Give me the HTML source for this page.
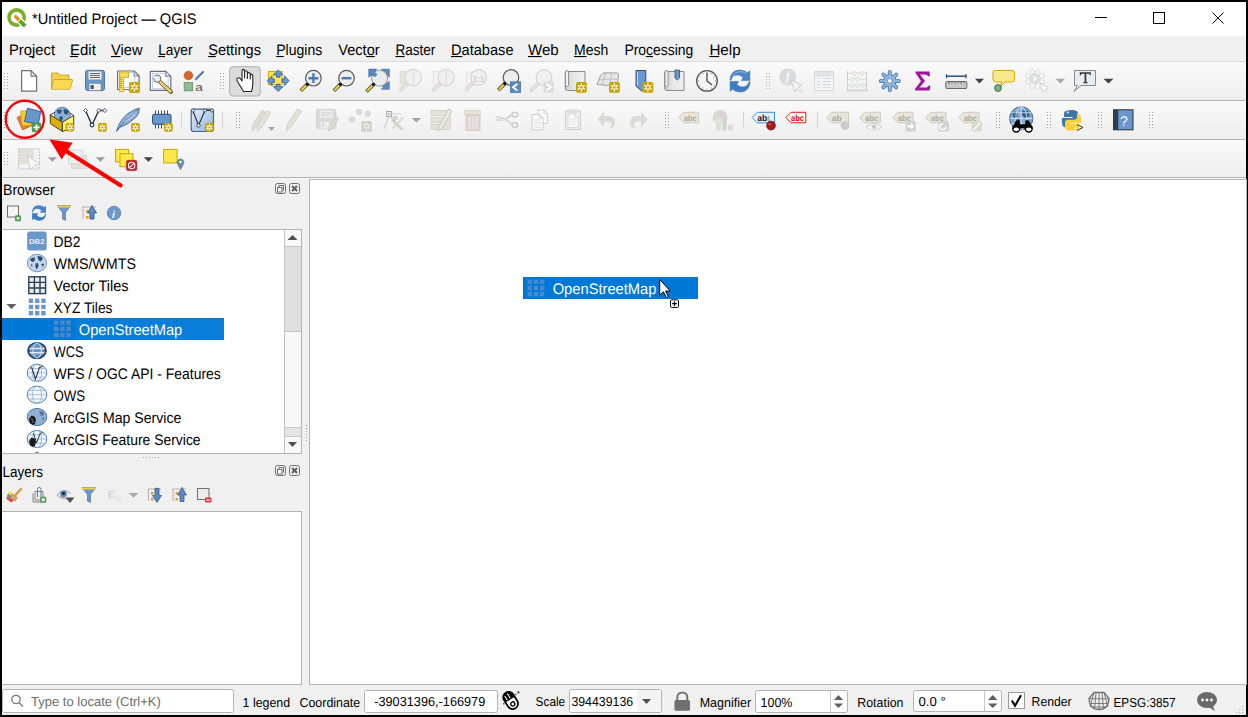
<!DOCTYPE html>
<html><head><meta charset="utf-8"><title>QGIS</title>
<style>html,body{margin:0;padding:0;background:#000;overflow:hidden;width:1248px;height:717px}svg{display:block}text{font-family:"Liberation Sans",sans-serif;text-rendering:geometricPrecision}</style>
</head><body>
<svg width="1248" height="717" viewBox="0 0 1248 717" font-family="Liberation Sans, sans-serif">
<defs>
<linearGradient id="vbg" x1="0" y1="0" x2="1" y2="1"><stop offset="0" stop-color="#e8eef6"/><stop offset="1" stop-color="#8fb2d8"/></linearGradient>
<linearGradient id="scr" x1="0" y1="0" x2="1" y2="0"><stop offset="0" stop-color="#c8c8c8"/><stop offset="0.4" stop-color="#e6e6e6"/><stop offset="1" stop-color="#f0f0f0"/></linearGradient>
<linearGradient id="tbg" x1="0" y1="0" x2="0" y2="1"><stop offset="0" stop-color="#fafafa"/><stop offset="1" stop-color="#eeeeee"/></linearGradient>
</defs>
<rect x="0" y="0" width="1248" height="717" fill="#000"/>
<rect x="2" y="2" width="1244" height="713" fill="#f0f0f0"/>
<rect x="2" y="2" width="1244" height="34" fill="#fff"/>
<rect x="2" y="36" width="1244" height="25" fill="#f0f0f0"/>
<rect x="2" y="61" width="1244" height="1" fill="#dadada"/>
<rect x="2" y="62" width="1244" height="38" fill="url(#tbg)"/>
<rect x="2" y="100" width="1244" height="1" fill="#b4b4b4"/>
<rect x="2" y="101" width="1244" height="38" fill="url(#tbg)"/>
<rect x="2" y="139" width="1244" height="1" fill="#b4b4b4"/>
<rect x="2" y="140" width="1244" height="37" fill="url(#tbg)"/>
<rect x="2" y="177" width="1244" height="1" fill="#b4b4b4"/>
<rect x="2" y="178" width="1244" height="1" fill="#f8f8f8"/>
<text x="32.00" y="24.00" font-size="15.30" textLength="164.50" lengthAdjust="spacingAndGlyphs" fill="#000" >*Untitled Project — QGIS</text>
<rect x="1095" y="17" width="12" height="1" fill="#000"/>
<rect x="1153.5" y="12.5" width="11" height="11" fill="none" stroke="#000" stroke-width="1"/>
<path d="M1212.5 12.5 L1223.5 23.5 M1223.5 12.5 L1212.5 23.5" stroke="#000" stroke-width="1"/>
<text x="9.00" y="55.00" font-size="15.30" textLength="46.00" lengthAdjust="spacingAndGlyphs" fill="#000" >Project</text>
<text x="70.00" y="55.00" font-size="15.30" textLength="25.80" lengthAdjust="spacingAndGlyphs" fill="#000" >Edit</text>
<text x="111.00" y="55.00" font-size="15.30" textLength="31.46" lengthAdjust="spacingAndGlyphs" fill="#000" >View</text>
<text x="158.20" y="55.00" font-size="15.30" textLength="34.31" lengthAdjust="spacingAndGlyphs" fill="#000" >Layer</text>
<text x="208.20" y="55.00" font-size="15.30" textLength="52.80" lengthAdjust="spacingAndGlyphs" fill="#000" >Settings</text>
<text x="276.20" y="55.00" font-size="15.30" textLength="46.10" lengthAdjust="spacingAndGlyphs" fill="#000" >Plugins</text>
<text x="338.30" y="55.00" font-size="15.30" textLength="41.30" lengthAdjust="spacingAndGlyphs" fill="#000" >Vector</text>
<text x="395.40" y="55.00" font-size="15.30" textLength="40.00" lengthAdjust="spacingAndGlyphs" fill="#000" >Raster</text>
<text x="451.00" y="55.00" font-size="15.30" textLength="62.50" lengthAdjust="spacingAndGlyphs" fill="#000" >Database</text>
<text x="528.00" y="55.00" font-size="15.30" textLength="30.75" lengthAdjust="spacingAndGlyphs" fill="#000" >Web</text>
<text x="574.00" y="55.00" font-size="15.30" textLength="34.30" lengthAdjust="spacingAndGlyphs" fill="#000" >Mesh</text>
<text x="624.40" y="55.00" font-size="15.30" textLength="68.90" lengthAdjust="spacingAndGlyphs" fill="#000" >Processing</text>
<text x="709.40" y="55.00" font-size="15.30" textLength="31.19" lengthAdjust="spacingAndGlyphs" fill="#000" >Help</text>
<rect x="29.2" y="56" width="4.4" height="1.1" fill="#000"/>
<rect x="70.0" y="56" width="8.0" height="1.1" fill="#000"/>
<rect x="111.0" y="56" width="9.5" height="1.1" fill="#000"/>
<rect x="158.2" y="56" width="6.8" height="1.1" fill="#000"/>
<rect x="208.2" y="56" width="7.6" height="1.1" fill="#000"/>
<rect x="276.2" y="56" width="7.6" height="1.1" fill="#000"/>
<rect x="366.0" y="56" width="8.8" height="1.1" fill="#000"/>
<rect x="395.4" y="56" width="9.2" height="1.1" fill="#000"/>
<rect x="451.0" y="56" width="11.3" height="1.1" fill="#000"/>
<rect x="528.0" y="56" width="13.7" height="1.1" fill="#000"/>
<rect x="574.0" y="56" width="12.5" height="1.1" fill="#000"/>
<rect x="645.8" y="56" width="7.2" height="1.1" fill="#000"/>
<rect x="709.4" y="56" width="9.8" height="1.1" fill="#000"/>
<text x="3.00" y="195.00" font-size="15.30" textLength="51.69" lengthAdjust="spacingAndGlyphs" fill="#000" >Browser</text>
<rect x="2" y="229" width="300" height="225" fill="#b4b4b4"/>
<rect x="2" y="230" width="299" height="223" fill="#fff"/>
<rect x="285" y="230" width="16" height="223" fill="#f8f8f8"/>
<rect x="284" y="230" width="1" height="223" fill="#c4c4c4"/>
<rect x="285" y="246" width="16" height="86" fill="#e0e0e0"/>
<rect x="285" y="246" width="16" height="1" fill="#c4c4c4"/>
<rect x="285" y="331" width="16" height="1" fill="#c4c4c4"/>
<rect x="285" y="427" width="16" height="9" fill="#e4e4e4"/>
<rect x="285" y="427" width="16" height="1" fill="#c8c8c8"/>
<rect x="285" y="436" width="16" height="1" fill="#c8c8c8"/>
<path d="M287.5 240 L292.5 235 L297.5 240 Z" fill="#505050"/>
<path d="M288 442 L297 442 L292.5 447 Z" fill="#505050"/>
<rect x="2" y="318" width="222" height="22" fill="#0078d7"/>
<rect x="75" y="318" width="149" height="22" fill="#0a7dd9"/>
<text x="53.50" y="246.50" font-size="15.30" textLength="27.00" lengthAdjust="spacingAndGlyphs" fill="#000" >DB2</text>
<text x="53.50" y="268.50" font-size="15.30" textLength="82.51" lengthAdjust="spacingAndGlyphs" fill="#000" >WMS/WMTS</text>
<text x="53.50" y="290.50" font-size="15.30" textLength="75.00" lengthAdjust="spacingAndGlyphs" fill="#000" >Vector Tiles</text>
<text x="53.50" y="312.50" font-size="15.30" textLength="59.00" lengthAdjust="spacingAndGlyphs" fill="#000" >XYZ Tiles</text>
<text x="78.80" y="334.50" font-size="15.30" textLength="103.49" lengthAdjust="spacingAndGlyphs" fill="#fff" >OpenStreetMap</text>
<text x="53.50" y="356.50" font-size="15.30" textLength="30.10" lengthAdjust="spacingAndGlyphs" fill="#000" >WCS</text>
<text x="53.50" y="378.50" font-size="15.30" textLength="167.31" lengthAdjust="spacingAndGlyphs" fill="#000" >WFS / OGC API - Features</text>
<text x="53.50" y="400.50" font-size="15.30" textLength="31.70" lengthAdjust="spacingAndGlyphs" fill="#000" >OWS</text>
<text x="53.50" y="422.50" font-size="15.30" textLength="127.80" lengthAdjust="spacingAndGlyphs" fill="#000" >ArcGIS Map Service</text>
<text x="53.50" y="444.50" font-size="15.30" textLength="147.10" lengthAdjust="spacingAndGlyphs" fill="#000" >ArcGIS Feature Service</text>
<path d="M6.5 304 L16.5 304 L11.5 309 Z" fill="#606060"/>
<rect x="143" y="457" width="1" height="1" fill="#a0a0a0"/>
<rect x="146" y="457" width="1" height="1" fill="#a0a0a0"/>
<rect x="149" y="457" width="1" height="1" fill="#a0a0a0"/>
<rect x="152" y="457" width="1" height="1" fill="#a0a0a0"/>
<rect x="155" y="457" width="1" height="1" fill="#a0a0a0"/>
<rect x="158" y="457" width="1" height="1" fill="#a0a0a0"/>
<rect x="306" y="425" width="1" height="1" fill="#a0a0a0"/>
<rect x="306" y="428" width="1" height="1" fill="#a0a0a0"/>
<rect x="306" y="431" width="1" height="1" fill="#a0a0a0"/>
<rect x="306" y="434" width="1" height="1" fill="#a0a0a0"/>
<rect x="306" y="437" width="1" height="1" fill="#a0a0a0"/>
<rect x="306" y="440" width="1" height="1" fill="#a0a0a0"/>
<text x="2.60" y="477.00" font-size="15.30" textLength="40.41" lengthAdjust="spacingAndGlyphs" fill="#000" >Layers</text>
<rect x="2" y="511" width="300" height="174" fill="#b4b4b4"/>
<rect x="2" y="512" width="299" height="172" fill="#fff"/>
<rect x="309.5" y="179.5" width="937" height="505" fill="#fff" stroke="#b4b4b4" stroke-width="1"/>
<rect x="523" y="277" width="175" height="22" fill="#0078d7"/>
<text x="552.70" y="293.60" font-size="15.30" textLength="103.79" lengthAdjust="spacingAndGlyphs" fill="#fff" >OpenStreetMap</text>
<rect x="2.5" y="689.5" width="231" height="23" rx="2" fill="#fff" stroke="#b4b4b4"/>
<text x="31.00" y="705.80" font-size="13.00" textLength="129.90" lengthAdjust="spacingAndGlyphs" fill="#6d6d6d" >Type to locate (Ctrl+K)</text>
<text x="242.60" y="706.70" font-size="13.00" textLength="47.50" lengthAdjust="spacingAndGlyphs" fill="#000" >1 legend</text>
<text x="299.50" y="706.70" font-size="13.00" textLength="60.70" lengthAdjust="spacingAndGlyphs" fill="#000" >Coordinate</text>
<rect x="364.5" y="690.5" width="133" height="22" rx="2" fill="#fff" stroke="#b4b4b4"/>
<text x="374.20" y="705.70" font-size="13.00" textLength="111.10" lengthAdjust="spacingAndGlyphs" fill="#000" >-39031396,-166979</text>
<text x="535.60" y="705.90" font-size="13.00" textLength="29.61" lengthAdjust="spacingAndGlyphs" fill="#000" >Scale</text>
<rect x="569.5" y="689.5" width="92" height="23" rx="2" fill="#fff" stroke="#b4b4b4"/>
<rect x="637" y="690" width="24" height="22" fill="#f4f4f4"/>
<text x="571.40" y="705.90" font-size="13.00" textLength="61.71" lengthAdjust="spacingAndGlyphs" fill="#000" >394439136</text>
<path d="M642 699 L651 699 L646.5 704 Z" fill="#505050"/>
<text x="699.70" y="706.70" font-size="13.00" textLength="51.40" lengthAdjust="spacingAndGlyphs" fill="#000" >Magnifier</text>
<rect x="755.5" y="690.5" width="92" height="22" rx="2" fill="#fff" stroke="#b4b4b4"/>
<rect x="830" y="691" width="1" height="21" fill="#c8c8c8"/>
<text x="760.60" y="706.70" font-size="13.00" textLength="31.80" lengthAdjust="spacingAndGlyphs" fill="#000" >100%</text>
<path d="M834 700 L843 700 L838.5 695 Z M834 703.5 L843 703.5 L838.5 708 Z" fill="#606060"/>
<text x="857.30" y="706.70" font-size="13.00" textLength="46.10" lengthAdjust="spacingAndGlyphs" fill="#000" >Rotation</text>
<rect x="913.5" y="690.5" width="88" height="21" rx="2" fill="#fff" stroke="#b4b4b4"/>
<rect x="984" y="691" width="1" height="20" fill="#c8c8c8"/>
<text x="918.40" y="705.60" font-size="13.00" textLength="27.30" lengthAdjust="spacingAndGlyphs" fill="#000" >0.0 °</text>
<path d="M988 700 L997.5 700 L992.75 695 Z M988 703.5 L997.5 703.5 L992.75 708 Z" fill="#606060"/>
<rect x="1008.5" y="692.5" width="16" height="16" fill="#fff" stroke="#9a9a9a"/>
<path d="M1011.8 700.5 L1015 705.8 L1021 695.3" fill="none" stroke="#000" stroke-width="2.1"/>
<text x="1031.60" y="706.20" font-size="13.00" textLength="40.10" lengthAdjust="spacingAndGlyphs" fill="#000" >Render</text>
<text x="1113.50" y="706.80" font-size="13.00" textLength="62.10" lengthAdjust="spacingAndGlyphs" fill="#000" >EPSG:3857</text>
<circle cx="16.6" cy="17.5" r="7.6" fill="none" stroke="#7cac2a" stroke-width="3.6"/>
<path d="M18.5 19.5 L27 28" stroke="#fff" stroke-width="6.5"/>
<path d="M15.6 16.6 L19.3 20.3" stroke="#f08020" stroke-width="3.2" stroke-linecap="round"/>
<path d="M19.3 20.3 L25.2 26.2" stroke="#5fa038" stroke-width="4"/>
<path d="M18.6 19.6 L20 21" stroke="#c8d840" stroke-width="3.6"/>
<rect x="4" y="73" width="1" height="1" fill="#a4a4a4"/><rect x="7" y="73" width="1" height="1" fill="#a4a4a4"/><rect x="4" y="76" width="1" height="1" fill="#a4a4a4"/><rect x="7" y="76" width="1" height="1" fill="#a4a4a4"/><rect x="4" y="79" width="1" height="1" fill="#a4a4a4"/><rect x="7" y="79" width="1" height="1" fill="#a4a4a4"/><rect x="4" y="82" width="1" height="1" fill="#a4a4a4"/><rect x="7" y="82" width="1" height="1" fill="#a4a4a4"/><rect x="4" y="85" width="1" height="1" fill="#a4a4a4"/><rect x="7" y="85" width="1" height="1" fill="#a4a4a4"/><rect x="4" y="88" width="1" height="1" fill="#a4a4a4"/><rect x="7" y="88" width="1" height="1" fill="#a4a4a4"/>
<path d="M21.6 70.6 H31.1 L36.6 76.1 V91.2 H21.6 Z" fill="#fff" stroke="#707070" stroke-width="1.2" stroke-linejoin="round"/>
<path d="M31.1 70.6 V76.1 H36.6" fill="none" stroke="#707070" stroke-width="1.1"/>
<path d="M51.5 73 H58 L60 75 H69 V80 H72.5 L70 89.2 H51.5 Z" fill="#f3d04c" stroke="#c9a932" stroke-width="1" stroke-linejoin="round"/>
<path d="M51.5 89.2 L54 79.5 H72.5" fill="none" stroke="#c9a932" stroke-width="1"/>
<path d="M52 89 L54.3 80 H72 L69.7 88.7 Z" fill="#fbd957"/>
<rect x="85.5" y="70.3" width="19" height="20.3" rx="2.2" fill="#6a97c9" stroke="#4a77aa" stroke-width="1"/>
<rect x="88.2" y="71.2" width="13.6" height="8.6" fill="#f0f0f0" stroke="#9a9a9a" stroke-width="0.5"/>
<path d="M90 73.5 H100 M90 75.5 H100 M90 77.5 H100" stroke="#555" stroke-width="0.9"/>
<rect x="89" y="83.4" width="12" height="7" fill="#efefef" stroke="#777" stroke-width="0.5"/>
<rect x="90.5" y="85" width="3.3" height="4" fill="#3b5d86"/>
<path d="M117.6 71.0 H134.1 L139.1 76.0 V89.5 H117.6 Z" fill="#fff" stroke="#707070" stroke-width="1.2" stroke-linejoin="round"/>
<path d="M134.1 71.0 V76.0 H139.1" fill="none" stroke="#707070" stroke-width="1.1"/>
<rect x="120" y="72.5" width="15" height="15" fill="none" stroke="#a8c4f0" stroke-width="0.8"/>
<path d="M119.5 72 H128.6 V77.5 H123.6 V91.8 H119.5 Z" fill="#f6d957" stroke="#d4aa1c" stroke-width="0.9"/>
<path d="M119.6 77.5 H122 M119.6 79.5 H122 M119.6 81.5 H122 M119.6 83.5 H122 M119.6 85.5 H122 M119.6 87.5 H122" stroke="#a08010" stroke-width="0.6"/>
<rect x="129.0" y="81.9" width="11.0" height="11.0" rx="1.8" fill="#c8a400"/>
<path d="M134.50 83.00 V91.80 M130.69 85.20 L138.31 89.60 M130.69 89.60 L138.31 85.20" stroke="#fff" stroke-width="1.1"/>
<circle cx="134.50" cy="87.40" r="1.87" fill="#c8a400" stroke="#fff" stroke-width="1"/>
<path d="M150.3 71.3 H165.8 L170.8 76.3 V90.3 H150.3 Z" fill="#fff" stroke="#707070" stroke-width="1.2" stroke-linejoin="round"/>
<path d="M165.8 71.3 V76.3 H170.8" fill="none" stroke="#707070" stroke-width="1.1"/>
<rect x="152.3" y="73.3" width="15.8" height="15.5" fill="none" stroke="#a8c4f0" stroke-width="0.9"/>
<path d="M158 80 L171 92" stroke="#5a5030" stroke-width="4" stroke-linecap="round"/>
<path d="M158 80 L170.5 91.5" stroke="#e8d070" stroke-width="2.6" stroke-linecap="round"/>
<circle cx="157.3" cy="78.6" r="3.6" fill="#e8e8e8" stroke="#707070" stroke-width="1"/>
<path d="M154 76.5 L157 79.5" stroke="#fff" stroke-width="1.6"/>
<circle cx="188.4" cy="75.5" r="4.3" fill="#d8652a" stroke="#b34a18" stroke-width="0.6"/>
<path d="M196 79 L203 72" stroke="#4e78ac" stroke-width="2.2" stroke-linecap="round"/>
<rect x="184.2" y="82.6" width="8.5" height="8.2" fill="#8fbb8f" stroke="#5b8f5b" stroke-width="0.8"/>
<text x="195.3" y="90.6" font-size="11" fill="#555" textLength="7.6" lengthAdjust="spacingAndGlyphs">a</text>
<rect x="220" y="73" width="1" height="1" fill="#a4a4a4"/><rect x="223" y="73" width="1" height="1" fill="#a4a4a4"/><rect x="220" y="76" width="1" height="1" fill="#a4a4a4"/><rect x="223" y="76" width="1" height="1" fill="#a4a4a4"/><rect x="220" y="79" width="1" height="1" fill="#a4a4a4"/><rect x="223" y="79" width="1" height="1" fill="#a4a4a4"/><rect x="220" y="82" width="1" height="1" fill="#a4a4a4"/><rect x="223" y="82" width="1" height="1" fill="#a4a4a4"/><rect x="220" y="85" width="1" height="1" fill="#a4a4a4"/><rect x="223" y="85" width="1" height="1" fill="#a4a4a4"/><rect x="220" y="88" width="1" height="1" fill="#a4a4a4"/><rect x="223" y="88" width="1" height="1" fill="#a4a4a4"/>
<rect x="229.7" y="66.7" width="30.5" height="29.3" rx="3" fill="#dcdcdc" stroke="#adadad" stroke-width="1"/>
<path d="M243.5 91.5 L237.5 81.5 Q236 78.5 238.2 77.8 Q239.8 77.3 241 79.5 L242 81 V71.2 Q242 69.4 243.3 69.4 Q244.6 69.4 244.6 71.2 V78 V72.3 Q244.6 70.8 246 70.8 Q247.4 70.8 247.4 72.3 V78.5 V73.8 Q247.4 72.6 248.8 72.6 Q250.2 72.6 250.2 73.8 V79 V75.6 Q250.2 74.4 251.5 74.4 Q252.8 74.4 252.8 75.6 V84 Q252.8 87.5 251.5 91.5 Z" fill="#fff" stroke="#222" stroke-width="1.1" stroke-linejoin="round"/>
<rect x="268.4" y="71.5" width="13.5" height="13.2" fill="#fde74c" stroke="#d2aa00" stroke-width="1"/>
<path d="M273.3 74.8 L278.2 70 L283.1 74.8 H279.9 V77.2 H276.5 V74.8 Z" fill="#6a97c9" stroke="#2f5d93" stroke-width="0.8" stroke-linejoin="round"/>
<path d="M273.3 86.6 L278.2 91.6 L283.1 86.6 H279.9 V84.2 H276.5 V86.6 Z" fill="#6a97c9" stroke="#2f5d93" stroke-width="0.8" stroke-linejoin="round"/>
<path d="M272 75.8 L267.2 80.7 L272 85.6 V82.4 H274.4 V79 H272 Z" fill="#6a97c9" stroke="#2f5d93" stroke-width="0.8" stroke-linejoin="round"/>
<path d="M284.4 75.8 L289.2 80.7 L284.4 85.6 V82.4 H282 V79 H284.4 Z" fill="#6a97c9" stroke="#2f5d93" stroke-width="0.8" stroke-linejoin="round"/>
<path d="M307.53 84.07 L300.81 90.79" stroke="#3a3a20" stroke-width="3.6"/>
<path d="M306.33 85.27 L301.24 90.36" stroke="#f0d040" stroke-width="2.2"/>
<circle cx="313.40" cy="78.20" r="7.80" fill="#ececec" stroke="#5a5a5a" stroke-width="1.2"/>
<circle cx="307.32" cy="84.28" r="1.5" fill="#000"/>
<path d="M313.4 73.3 V83.1 M308.5 78.2 H318.3" stroke="#4e7bb5" stroke-width="2.4"/>
<path d="M340.63 84.07 L333.91 90.79" stroke="#3a3a20" stroke-width="3.6"/>
<path d="M339.43 85.27 L334.34 90.36" stroke="#f0d040" stroke-width="2.2"/>
<circle cx="346.50" cy="78.20" r="7.80" fill="#ececec" stroke="#5a5a5a" stroke-width="1.2"/>
<circle cx="340.42" cy="84.28" r="1.5" fill="#000"/>
<path d="M341.6 78.2 H351.4" stroke="#4e7bb5" stroke-width="2.4"/>
<path transform="translate(368.8 69.2)" d="M0 0 H8 L6 2.2 L8.6 4.8 L4.8 8.6 L2.2 6 L0 8 Z" fill="#5b8ac2" stroke="#3b6aa3" stroke-width="0.6"/>
<path transform="translate(389.3 69.2) scale(-1 1)" d="M0 0 H8 L6 2.2 L8.6 4.8 L4.8 8.6 L2.2 6 L0 8 Z" fill="#5b8ac2" stroke="#3b6aa3" stroke-width="0.6"/>
<path transform="translate(389.3 89.3) scale(-1 -1)" d="M0 0 H8 L6 2.2 L8.6 4.8 L4.8 8.6 L2.2 6 L0 8 Z" fill="#5b8ac2" stroke="#3b6aa3" stroke-width="0.6"/>
<circle cx="379.6" cy="78.2" r="8" fill="#ebebeb" stroke="#8a8a8a" stroke-width="0.9"/>
<path transform="translate(368.8 69.2)" d="M0 0 H8 L6 2.2 L8.6 4.8 L4.8 8.6 L2.2 6 L0 8 Z" fill="#5b8ac2" opacity="0.0"/>
<path d="M374 84 L366.5 91.5" stroke="#3a3a20" stroke-width="3.6"/><path d="M372.5 85.5 L367 91" stroke="#f0d040" stroke-width="2.2"/><circle cx="373.6" cy="84.2" r="1.5" fill="#000"/>
<path d="M369.2 69.6 H376 L374 71.6 L377 74.6 L374.6 77 L371.6 74 L369.6 76 Z" fill="#5b8ac2" stroke="#3b6aa3" stroke-width="0.6"/>
<rect x="400" y="71.2" width="7.5" height="12.8" fill="#e4e2da" stroke="#d8d6ce" stroke-width="0.6"/>
<path d="M406.79 84.11 L401.14 89.76" stroke="#d8d6ce" stroke-width="4" stroke-linecap="round"/>
<path d="M406.44 84.46 L401.49 89.41" stroke="#e6e4dc" stroke-width="2.2" stroke-linecap="round"/>
<circle cx="413.30" cy="77.60" r="8.20" fill="#f0f0f0" stroke="#d6d6d6" stroke-width="1.2"/>
<path d="M413.5 70 V85.5" stroke="#d8d8d8" stroke-width="0.8"/>
<rect x="433.3" y="71.2" width="7" height="12.8" fill="#f4f4f4" stroke="#dcdcdc" stroke-width="0.7"/>
<path d="M439.59 84.11 L433.94 89.76" stroke="#d8d6ce" stroke-width="4" stroke-linecap="round"/>
<path d="M439.24 84.46 L434.29 89.41" stroke="#e6e4dc" stroke-width="2.2" stroke-linecap="round"/>
<circle cx="446.10" cy="77.60" r="8.20" fill="#f0f0f0" stroke="#d6d6d6" stroke-width="1.2"/>
<path d="M446.3 70 V85.5" stroke="#d8d8d8" stroke-width="0.8"/>
<rect x="466.5" y="72" width="7" height="12" fill="#f4f4f4" stroke="#dcdcdc" stroke-width="0.7"/>
<path d="M472.28 83.72 L466.62 89.38" stroke="#d8d6ce" stroke-width="4" stroke-linecap="round"/>
<path d="M471.92 84.08 L466.97 89.03" stroke="#e6e4dc" stroke-width="2.2" stroke-linecap="round"/>
<circle cx="478.50" cy="77.50" r="7.80" fill="#f0f0f0" stroke="#d6d6d6" stroke-width="1.2"/>
<text x="472.8" y="81.6" font-size="9" font-weight="bold" fill="#cfcfcf" textLength="11.5" lengthAdjust="spacingAndGlyphs">1:1</text>
<path d="M505.13 83.37 L498.41 90.09" stroke="#3a3a20" stroke-width="3.6"/>
<path d="M503.93 84.57 L498.84 89.66" stroke="#f0d040" stroke-width="2.2"/>
<circle cx="511.00" cy="77.50" r="7.80" fill="#ececec" stroke="#5a5a5a" stroke-width="1.2"/>
<circle cx="504.92" cy="83.58" r="1.5" fill="#000"/>
<rect x="510.3" y="81.8" width="10.4" height="10.8" fill="#5b8ac2" stroke="#3b6aa3" stroke-width="0.6"/>
<path d="M517.5 83.8 L513 87.2 L517.5 90.6" fill="none" stroke="#fff" stroke-width="1.8"/>
<path d="M537.78 83.72 L531.41 90.09" stroke="#d8d6ce" stroke-width="4" stroke-linecap="round"/>
<path d="M537.42 84.08 L531.77 89.73" stroke="#e6e4dc" stroke-width="2.2" stroke-linecap="round"/>
<circle cx="544.00" cy="77.50" r="7.80" fill="#f0f0f0" stroke="#d6d6d6" stroke-width="1.2"/>
<rect x="543.5" y="81.8" width="10.4" height="10.8" fill="#dcdcdc"/>
<path d="M546.5 83.8 L551 87.2 L546.5 90.6" fill="none" stroke="#fff" stroke-width="1.8"/>
<path d="M567 71.5 H585 V90.5 H567.5 Q565.2 90.5 565.2 88 V73 Q565.2 70.5 567 70.5 Z" fill="url(#scr)" stroke="#8a8a8a" stroke-width="1" stroke-linejoin="round"/>
<path d="M565.5 72 Q566.5 69.8 568.5 71 V85.5 Q567 87 565.5 86 Z" fill="#f4f4f4" stroke="#8a8a8a" stroke-width="0.9"/>
<rect x="576.0" y="82.0" width="10.8" height="10.8" rx="1.8" fill="#c8a400"/>
<path d="M581.40 83.08 V91.72 M577.66 85.24 L585.14 89.56 M577.66 89.56 L585.14 85.24" stroke="#fff" stroke-width="1.1"/>
<circle cx="581.40" cy="87.40" r="1.84" fill="#c8a400" stroke="#fff" stroke-width="1"/>
<path d="M597 84.5 L600.5 75.5 Q602 73 605 72.8 L617.5 73 L618.5 75 L617.5 85 Q607 86 597 84.5 Z" fill="#e6e6e6" stroke="#9a9a9a" stroke-width="0.9" stroke-linejoin="round"/>
<path d="M599 80 Q608 78 618 79.5 M605.5 73 L602.5 85 M611.5 73 L610 85.5" fill="none" stroke="#b0b0b0" stroke-width="0.7"/>
<rect x="609.0" y="82.0" width="10.8" height="10.8" rx="1.8" fill="#c8a400"/>
<path d="M614.40 83.08 V91.72 M610.66 85.24 L618.14 89.56 M610.66 89.56 L618.14 85.24" stroke="#fff" stroke-width="1.1"/>
<circle cx="614.40" cy="87.40" r="1.84" fill="#c8a400" stroke="#fff" stroke-width="1"/>
<path d="M636 70.5 H645.8 V91 H641.5 L636 86 Z" fill="#6a97c9" stroke="#2f4f78" stroke-width="1" stroke-linejoin="round"/>
<path d="M637.5 72 V85.5" stroke="#cfe0f2" stroke-width="0.9"/>
<rect x="642.5" y="82.0" width="10.8" height="10.8" rx="1.8" fill="#c8a400"/>
<path d="M647.90 83.08 V91.72 M644.16 85.24 L651.64 89.56 M644.16 89.56 L651.64 85.24" stroke="#fff" stroke-width="1.1"/>
<circle cx="647.90" cy="87.40" r="1.84" fill="#c8a400" stroke="#fff" stroke-width="1"/>
<path d="M666.5 71.5 H684 V90.5 H667 Q664.7 90.5 664.7 88 V73 Q664.7 70.5 666.5 70.5 Z" fill="url(#scr)" stroke="#8a8a8a" stroke-width="1" stroke-linejoin="round"/>
<path d="M665 72 Q666 69.8 668 71 V85.5 Q666.5 87 665 86 Z" fill="#f4f4f4" stroke="#8a8a8a" stroke-width="0.9"/>
<path d="M675 70 H679.5 V78 L677.25 80 L675 78 Z" fill="#6a97c9" stroke="#2f4f78" stroke-width="0.8"/>
<circle cx="707" cy="80.9" r="10.3" fill="#f6f6f6" stroke="#555" stroke-width="1.3"/>
<path d="M707 73 V81 L712 85" fill="none" stroke="#444" stroke-width="1.3"/>
<circle cx="707.00" cy="72.70" r="0.55" fill="#4e7bb5"/>
<circle cx="711.10" cy="73.80" r="0.55" fill="#4e7bb5"/>
<circle cx="714.10" cy="76.80" r="0.55" fill="#4e7bb5"/>
<circle cx="715.20" cy="80.90" r="0.55" fill="#4e7bb5"/>
<circle cx="714.10" cy="85.00" r="0.55" fill="#4e7bb5"/>
<circle cx="711.10" cy="88.00" r="0.55" fill="#4e7bb5"/>
<circle cx="707.00" cy="89.10" r="0.55" fill="#4e7bb5"/>
<circle cx="702.90" cy="88.00" r="0.55" fill="#4e7bb5"/>
<circle cx="699.90" cy="85.00" r="0.55" fill="#4e7bb5"/>
<circle cx="698.80" cy="80.90" r="0.55" fill="#4e7bb5"/>
<circle cx="699.90" cy="76.80" r="0.55" fill="#4e7bb5"/>
<circle cx="702.90" cy="73.80" r="0.55" fill="#4e7bb5"/>
<path d="M729.9 80.2 C730.3 74 734 70 739 70 C743 70 746 71.5 747.5 72.8 L749.9 70.8 V80.6 H741.2 L743.2 77.8 C741.5 76 739.5 75 737 75 C734 75 731.8 77 731 80.2 Z" fill="#4a84c6" stroke="#3a70b0" stroke-width="0.5"/>
<path transform="rotate(180 740 81)" d="M729.9 80.2 C730.3 74 734 70 739 70 C743 70 746 71.5 747.5 72.8 L749.9 70.8 V80.6 H741.2 L743.2 77.8 C741.5 76 739.5 75 737 75 C734 75 731.8 77 731 80.2 Z" fill="#3f7bc0" stroke="#3a70b0" stroke-width="0.5"/>
<path d="M732.5 77 C734 73 737 71.8 740 71.8 C743 71.8 745 72.5 746 73.5" fill="none" stroke="#9cc0e8" stroke-width="0.9"/>
<rect x="766" y="73" width="1" height="1" fill="#a4a4a4"/><rect x="769" y="73" width="1" height="1" fill="#a4a4a4"/><rect x="766" y="76" width="1" height="1" fill="#a4a4a4"/><rect x="769" y="76" width="1" height="1" fill="#a4a4a4"/><rect x="766" y="79" width="1" height="1" fill="#a4a4a4"/><rect x="769" y="79" width="1" height="1" fill="#a4a4a4"/><rect x="766" y="82" width="1" height="1" fill="#a4a4a4"/><rect x="769" y="82" width="1" height="1" fill="#a4a4a4"/><rect x="766" y="85" width="1" height="1" fill="#a4a4a4"/><rect x="769" y="85" width="1" height="1" fill="#a4a4a4"/><rect x="766" y="88" width="1" height="1" fill="#a4a4a4"/><rect x="769" y="88" width="1" height="1" fill="#a4a4a4"/>
<circle cx="787.7" cy="77" r="8.5" fill="#d8dadc"/>
<path d="M788.3 74.5 L786.5 82.5 M787 74.5 H789" stroke="#f4f4f4" stroke-width="2" stroke-linecap="round"/>
<circle cx="789.5" cy="71.8" r="1.1" fill="#f4f4f4"/>
<path d="M790.8 79.8 L795 92 L797 88.5 L801 92.2 L802.5 90.8 L798.5 87 L802 85.5 Z" fill="#f4f4f4" stroke="#c8c8c8" stroke-width="0.9" stroke-linejoin="round"/>
<rect x="814.5" y="71.5" width="19" height="19" fill="#f2f4f6" stroke="#d4d8dc" stroke-width="1"/>
<rect x="815" y="72" width="18" height="3.5" fill="#e4e8ec"/>
<path d="M815 75.8 H833" stroke="#d4d8dc" stroke-width="0.8"/>
<path d="M817 73.8 H820 M823 73.8 H830 M817 78.5 H820 M823 78.5 H831 M817 81.5 H820 M823 81.5 H831 M817 84.5 H820 M823 84.5 H831 M817 87.5 H820 M823 87.5 H831" stroke="#d6dadf" stroke-width="1"/>
<path d="M847.5 71 V90 M866.5 71 V90" stroke="#cdcdcd" stroke-width="1"/>
<rect x="846.5" y="89.5" width="21" height="2" fill="#d4d4d4"/>
<path d="M847.5 73.3 H866.5 M847.5 79.3 H866.5 M847.5 85.3 H866.5" stroke="#d6d6d6" stroke-width="0.9"/>
<path d="M854.5 71.0 l2.3 2.3 l-2.3 2.3 l-2.3 -2.3 Z" fill="#f0f0f0" stroke="#dcc8c8" stroke-width="0.8"/>
<path d="M862.0 71.0 l2.3 2.3 l-2.3 2.3 l-2.3 -2.3 Z" fill="#f0f0f0" stroke="#dcc8c8" stroke-width="0.8"/>
<path d="M852.3 77.0 l2.3 2.3 l-2.3 2.3 l-2.3 -2.3 Z" fill="#f0f0f0" stroke="#ccd8cc" stroke-width="0.8"/>
<path d="M857.5 77.0 l2.3 2.3 l-2.3 2.3 l-2.3 -2.3 Z" fill="#f0f0f0" stroke="#ccd8cc" stroke-width="0.8"/>
<path d="M852.3 83.0 l2.3 2.3 l-2.3 2.3 l-2.3 -2.3 Z" fill="#f0f0f0" stroke="#c8d0dc" stroke-width="0.8"/>
<path d="M857.5 83.0 l2.3 2.3 l-2.3 2.3 l-2.3 -2.3 Z" fill="#f0f0f0" stroke="#c8d0dc" stroke-width="0.8"/>
<path d="M862.7 83.0 l2.3 2.3 l-2.3 2.3 l-2.3 -2.3 Z" fill="#f0f0f0" stroke="#c8d0dc" stroke-width="0.8"/>
<path d="M889.80 71.90 L889.80 89.90 M883.44 74.54 L896.16 87.26 M880.80 80.90 L898.80 80.90 M883.44 87.26 L896.16 74.54" stroke="#4a7ab8" stroke-width="4" stroke-linecap="round"/>
<circle cx="889.8" cy="80.9" r="6.6" fill="#4a7ab8"/>
<path d="M889.80 71.90 L889.80 89.90 M883.44 74.54 L896.16 87.26 M880.80 80.90 L898.80 80.90 M883.44 87.26 L896.16 74.54" stroke="#93b6de" stroke-width="2.2" stroke-linecap="round"/>
<circle cx="889.8" cy="80.9" r="5.6" fill="#93b6de"/>
<circle cx="889.8" cy="80.9" r="2.3" fill="#fff" stroke="#4a7ab8" stroke-width="0.7"/>
<path d="M915.5 71.5 H929.5 L930 76.5 L928 76 Q927 74.5 925 74.5 H920 L925 81 L919.5 87.5 H926 Q928 87.5 929 85.5 L930.5 85.5 L929.5 90.5 H915 V89 L921 81 L915.5 73 Z" fill="#a0159f"/>
<path d="M946.5 76.2 H966" stroke="#2f4f78" stroke-width="1.5"/>
<path d="M946.5 74.3 V78.2 M966 74.3 V78.2" stroke="#2f4f78" stroke-width="1.3"/>
<rect x="945.8" y="81.5" width="21" height="7" rx="0.8" fill="#c8c8c8" stroke="#6a6a6a" stroke-width="1"/>
<path d="M949 81.5 V84 M952 81.5 V83.3 M955 81.5 V84 M958 81.5 V83.3 M961 81.5 V84 M964 81.5 V83.3" stroke="#555" stroke-width="0.8"/>
<path d="M975.0 78.8 L984.0 78.8 L979.5 83.6 Z" fill="#404040"/>
<path d="M995.5 70.5 H1012 Q1014.6 70.5 1014.6 73 V79.5 Q1014.6 82 1012 82 H1005 L1000 87 L1002 82 H995.5 Q993 82 993 79.5 V73 Q993 70.5 995.5 70.5 Z" fill="#fbe88a" stroke="#d4a800" stroke-width="1" stroke-linejoin="round"/>
<circle cx="998" cy="88" r="3.4" fill="#72b47a" stroke="#4a5a4a" stroke-width="0.9"/>
<path d="M1031.71 70.85 L1038.29 86.75 M1027.05 75.51 L1042.95 82.09 M1027.05 82.09 L1042.95 75.51 M1031.71 86.75 L1038.29 70.85" stroke="#d8d8d8" stroke-width="4.2" stroke-linecap="round"/>
<circle cx="1035.0" cy="78.8" r="7.8" fill="#d8d8d8"/>
<path d="M1031.71 70.85 L1038.29 86.75 M1027.05 75.51 L1042.95 82.09 M1027.05 82.09 L1042.95 75.51 M1031.71 86.75 L1038.29 70.85" stroke="#f8f8f8" stroke-width="2.6" stroke-linecap="round"/>
<circle cx="1035.0" cy="78.8" r="7" fill="#f8f8f8"/>
<circle cx="1035.0" cy="78.8" r="5.6" fill="#dcdee2" stroke="#d0d2d6" stroke-width="0.6"/>
<path d="M1033.3 76 V81.8 L1037.8 78.9 Z" fill="#f8f8f8"/>
<path d="M1040.5 83 L1042.5 92.3 L1044.3 90 L1047.3 93 L1048.6 91.8 L1045.6 88.8 L1048.2 87.6 Z" fill="#f8f8f8" stroke="#cfcfcf" stroke-width="0.9" stroke-linejoin="round"/>
<path d="M1055.7 78.8 L1065.0 78.8 L1060.3 83.6 Z" fill="#a8a8a8"/>
<path d="M1074.5 70.5 H1095.5 V85.5 H1081 L1074 91.5 L1077.5 85.5 H1074.5 Z" fill="#e6eef4" stroke="#8a8a8a" stroke-width="1" stroke-linejoin="round"/>
<path d="M1079.8 72.3 H1090.8 V75.3 H1090 L1089.3 73.8 H1086.3 V82 L1087.8 82.4 V83.2 H1083.2 V82.4 L1084.6 82 V73.8 H1081.6 L1080.8 75.3 H1079.8 Z" fill="#333"/>
<path d="M1103.5 78.8 L1113.4 78.8 L1108.5 83.6 Z" fill="#404040"/>
<rect x="4" y="112" width="1" height="1" fill="#a4a4a4"/><rect x="7" y="112" width="1" height="1" fill="#a4a4a4"/><rect x="4" y="115" width="1" height="1" fill="#a4a4a4"/><rect x="7" y="115" width="1" height="1" fill="#a4a4a4"/><rect x="4" y="118" width="1" height="1" fill="#a4a4a4"/><rect x="7" y="118" width="1" height="1" fill="#a4a4a4"/><rect x="4" y="121" width="1" height="1" fill="#a4a4a4"/><rect x="7" y="121" width="1" height="1" fill="#a4a4a4"/><rect x="4" y="124" width="1" height="1" fill="#a4a4a4"/><rect x="7" y="124" width="1" height="1" fill="#a4a4a4"/><rect x="4" y="127" width="1" height="1" fill="#a4a4a4"/><rect x="7" y="127" width="1" height="1" fill="#a4a4a4"/>
<path d="M17 117.5 L27.5 112.5 L32 125.5 L22.5 130 Z" fill="#e07b39" stroke="#b45a22" stroke-width="0.7"/>
<path d="M20.5 111.2 L30.5 110.2 L31.8 125.3 L22 125.8 Z" fill="#f3cc2a" stroke="#c9a020" stroke-width="0.7"/>
<path d="M27.5 108.3 L40.8 111.6 L38.2 124.2 L24.5 121.4 Z" fill="#6a97c9" stroke="#2f5d93" stroke-width="0.9" stroke-linejoin="round"/>
<rect x="32.2" y="123" width="8.6" height="8.8" rx="1.2" fill="#4f9a55" stroke="#3a7a40" stroke-width="0.6"/>
<path d="M36.5 124.4 V130.4 M33.5 127.4 H39.5" stroke="#fff" stroke-width="1.7"/>
<circle cx="62.2" cy="115.2" r="8" fill="#8fb2d8" stroke="#4a74a4" stroke-width="0.8"/>
<path d="M56.5 111 Q59 108.5 62 110.5 L60.5 114 L58 113.5 Z M63.5 109 Q67 108.5 69 111.5 L67 115 L64 113.5 Z M59.5 116 L63 117 L62 121 L59.5 120 Z" fill="#2c5282"/>
<path d="M50.1 114.9 L62.4 122.2 V131.5 L50.4 123.6 Z" fill="#dcb000" stroke="#3a3000" stroke-width="0.9" stroke-linejoin="round"/>
<path d="M62.4 122.2 L73.7 115.5 V127.5 L62.4 131.5 Z" fill="#fdf77e" stroke="#3a3000" stroke-width="0.9" stroke-linejoin="round"/>
<path d="M50.1 114.9 L55 112.2 M73.7 115.5 L69.5 113" stroke="#3a3000" stroke-width="0.9"/>
<rect x="65.5" y="123.0" width="8.6" height="8.6" rx="1.8" fill="#c8a400"/>
<path d="M69.80 123.86 V130.74 M66.82 125.58 L72.78 129.02 M66.82 129.02 L72.78 125.58" stroke="#fff" stroke-width="1.1"/>
<circle cx="69.80" cy="127.30" r="1.46" fill="#c8a400" stroke="#fff" stroke-width="1"/>
<path d="M85.5 110.5 L92 125 L98.8 110.5 L104.8 110.5" fill="none" stroke="#25364a" stroke-width="1.4"/>
<path d="M85.5 108.5 l2 2 l-2 2 l-2 -2 Z" fill="#fff" stroke="#25364a" stroke-width="0.8"/>
<path d="M98.8 108.5 l2 2 l-2 2 l-2 -2 Z" fill="#fff" stroke="#25364a" stroke-width="0.8"/>
<path d="M104.8 108.5 l2 2 l-2 2 l-2 -2 Z" fill="#fff" stroke="#25364a" stroke-width="0.8"/>
<circle cx="92" cy="125" r="1.9" fill="#fff" stroke="#25364a" stroke-width="1.1"/>
<rect x="98.0" y="123.0" width="8.8" height="8.8" rx="1.8" fill="#c8a400"/>
<path d="M102.40 123.88 V130.92 M99.35 125.64 L105.45 129.16 M99.35 129.16 L105.45 125.64" stroke="#fff" stroke-width="1.1"/>
<circle cx="102.40" cy="127.40" r="1.50" fill="#c8a400" stroke="#fff" stroke-width="1"/>
<path d="M116.5 131.5 Q119 121 127.5 113.8 Q133.5 109.5 139.3 108 Q139.6 113.5 136.5 116.5 Q129 124.5 119.5 127.5 Z" fill="#8fb2d8" stroke="#3f6594" stroke-width="0.9" stroke-linejoin="round"/>
<path d="M117 130.5 Q125 119 138 109.5" fill="none" stroke="#3f6594" stroke-width="0.8"/>
<path d="M124 122 Q130 119 135 115 M127 118 Q132 115 136.5 111.5" fill="none" stroke="#d0e0f0" stroke-width="0.6"/>
<rect x="131.0" y="123.0" width="8.8" height="8.8" rx="1.8" fill="#c8a400"/>
<path d="M135.40 123.88 V130.92 M132.35 125.64 L138.45 129.16 M132.35 129.16 L138.45 125.64" stroke="#fff" stroke-width="1.1"/>
<circle cx="135.40" cy="127.40" r="1.50" fill="#c8a400" stroke="#fff" stroke-width="1"/>
<path d="M155.5 110.5 V115 M158.5 110.5 V115 M161.5 110.5 V115 M164.5 110.5 V115 M167.5 110.5 V115 M155.5 124 V128.5 M158.5 124 V128.5 M161.5 124 V128.5 M164.5 124 V128.5 M167.5 124 V128.5" stroke="#2f4f78" stroke-width="1"/>
<rect x="152.5" y="114.3" width="18.5" height="10" rx="1.5" fill="#6a97c9" stroke="#2f4f78" stroke-width="1"/>
<rect x="164.0" y="123.0" width="8.8" height="8.8" rx="1.8" fill="#c8a400"/>
<path d="M168.40 123.88 V130.92 M165.35 125.64 L171.45 129.16 M165.35 129.16 L171.45 125.64" stroke="#fff" stroke-width="1.1"/>
<circle cx="168.40" cy="127.40" r="1.50" fill="#c8a400" stroke="#fff" stroke-width="1"/>
<rect x="181.0" y="111.4" width="1" height="18.0" fill="#d4d4d4"/>
<rect x="191.2" y="109.2" width="22.3" height="22.3" rx="2.5" fill="url(#vbg)" stroke="#3f6594" stroke-width="1.2"/>
<path d="M192.8 110.5 L198.5 125.5 L205 110.5 L212 110.5" fill="none" stroke="#25364a" stroke-width="1.2"/>
<circle cx="192.8" cy="110.5" r="1.5" fill="#fff" stroke="#25364a" stroke-width="0.8"/>
<circle cx="205.0" cy="110.5" r="1.5" fill="#fff" stroke="#25364a" stroke-width="0.8"/>
<circle cx="212.0" cy="110.5" r="1.5" fill="#fff" stroke="#25364a" stroke-width="0.8"/>
<circle cx="198.5" cy="125.5" r="1.7" fill="#fff" stroke="#25364a" stroke-width="0.9"/>
<rect x="205.0" y="123.0" width="8.8" height="8.8" rx="1.8" fill="#c8a400"/>
<path d="M209.40 123.88 V130.92 M206.35 125.64 L212.45 129.16 M206.35 129.16 L212.45 125.64" stroke="#fff" stroke-width="1.1"/>
<circle cx="209.40" cy="127.40" r="1.50" fill="#c8a400" stroke="#fff" stroke-width="1"/>
<rect x="222.0" y="111.4" width="1" height="18.0" fill="#d4d4d4"/>
<rect x="236" y="112" width="1" height="1" fill="#a4a4a4"/><rect x="239" y="112" width="1" height="1" fill="#a4a4a4"/><rect x="236" y="115" width="1" height="1" fill="#a4a4a4"/><rect x="239" y="115" width="1" height="1" fill="#a4a4a4"/><rect x="236" y="118" width="1" height="1" fill="#a4a4a4"/><rect x="239" y="118" width="1" height="1" fill="#a4a4a4"/><rect x="236" y="121" width="1" height="1" fill="#a4a4a4"/><rect x="239" y="121" width="1" height="1" fill="#a4a4a4"/><rect x="236" y="124" width="1" height="1" fill="#a4a4a4"/><rect x="239" y="124" width="1" height="1" fill="#a4a4a4"/><rect x="236" y="127" width="1" height="1" fill="#a4a4a4"/><rect x="239" y="127" width="1" height="1" fill="#a4a4a4"/>
<path d="M252 131 L253 124 L262 110 L266 112.5 L257 126.5 Z" fill="#dedbd2" stroke="#d2cfc6" stroke-width="0.8"/>
<path d="M257 131.5 L258 124.5 L267 110.5 L271 113 L262 127 Z" fill="#e4e1d8" stroke="#d2cfc6" stroke-width="0.8"/>
<path d="M268.0 127.0 L275.0 127.0 L271.5 131.0 Z" fill="#a8a8a8"/>
<path d="M286.5 131 L287.5 124 L297.5 108.8 L301.5 111.3 L291.5 126.5 Z" fill="#e4e1d8" stroke="#d0cdc4" stroke-width="0.9"/>
<rect x="316.5" y="109.3" width="19.5" height="19.5" rx="2" fill="#dadada" stroke="#cfcfcf" stroke-width="0.8"/>
<rect x="319.8" y="110.5" width="12.5" height="7.5" fill="#eeeeee"/>
<path d="M321 112.5 H331 M321 114.3 H331 M321 116.1 H331" stroke="#d0d0d0" stroke-width="0.7"/>
<rect x="320.5" y="122" width="9" height="6.5" fill="#eeeeee"/>
<rect x="322" y="123" width="2" height="4" fill="#d8d8d8"/>
<path d="M328.5 131.5 L329.3 126.5 L336 117 L338.5 118.8 L332 128.3 Z" fill="#e2ddd4" stroke="#c8c2b6" stroke-width="0.7"/>
<circle cx="352.0" cy="119.5" r="2.6" fill="#dcdcdc" stroke="#c8c8c8" stroke-width="0.7"/>
<circle cx="359.0" cy="111.8" r="2.6" fill="#dcdcdc" stroke="#c8c8c8" stroke-width="0.7"/>
<circle cx="368.0" cy="113.8" r="2.6" fill="#dcdcdc" stroke="#c8c8c8" stroke-width="0.7"/>
<rect x="361.3" y="121" width="10.5" height="10.8" rx="1.5" fill="#d2cfc4"/>
<path d="M366.55 122.2 V130.6 M362.5 124.1 L370.6 128.7 M362.5 128.7 L370.6 124.1" stroke="#f6f6f6" stroke-width="0.9"/>
<circle cx="366.55" cy="126.4" r="1.6" fill="#d2cfc4" stroke="#f6f6f6" stroke-width="0.7"/>
<rect x="386.5" y="111.5" width="5" height="5" fill="#eee" stroke="#a8a8a8" stroke-width="1"/>
<circle cx="389" cy="114" r="0.9" fill="#a8a8a8"/>
<path d="M391.5 113.8 H401.5" stroke="#d8d8d8" stroke-width="1.2"/>
<path d="M388.5 117 L383.8 129.5" stroke="#b8b8b8" stroke-width="0.7"/>
<path d="M392 119.5 L402 129.5" stroke="#d4d0c4" stroke-width="2.8"/>
<path d="M403 117.5 L392.5 128.5" stroke="#dcdad0" stroke-width="2.2"/>
<path d="M391 118 L396 116 L398 118.5 L394 121 Z" fill="#d8d8d8" stroke="#c4c4c4" stroke-width="0.6"/>
<path d="M411.7 118.0 L421.0 118.0 L416.4 122.4 Z" fill="#a0a0a0"/>
<rect x="431" y="110.5" width="19.5" height="5" fill="#e4e1d8" stroke="#d2cfc6" stroke-width="0.8"/>
<rect x="431" y="117.5" width="19.5" height="5" fill="#e4e1d8" stroke="#d2cfc6" stroke-width="0.8"/>
<rect x="431" y="124.5" width="19.5" height="5" fill="#e4e1d8" stroke="#d2cfc6" stroke-width="0.8"/>
<path d="M438 131 L439 126 L448.5 109 L452 111 L442.5 128 Z" fill="#ebe8e0" stroke="#c6c2b6" stroke-width="0.8"/>
<rect x="464.5" y="110.5" width="16" height="4" fill="#e6e2d8" stroke="#d8d2c6" stroke-width="0.7"/>
<rect x="466" y="115" width="14" height="15.5" fill="#e2d8d4" stroke="#d6c8c4" stroke-width="0.9"/>
<path d="M469.5 117 V129 M473 117 V129 M476.5 117 V129" stroke="#f0eaea" stroke-width="1"/>
<path d="M496.5 117.5 Q503 117 511.5 124 M496.5 120 Q504 121 511.5 115" fill="none" stroke="#d2d2d2" stroke-width="1.8"/>
<path d="M497 118.2 Q503 118 510 123.2" fill="none" stroke="#f4f4f4" stroke-width="0.6"/>
<ellipse cx="514.8" cy="114.5" rx="2.8" ry="2.4" fill="none" stroke="#c8c8c8" stroke-width="1.4"/>
<ellipse cx="514.8" cy="125" rx="2.8" ry="2.4" fill="none" stroke="#c8c8c8" stroke-width="1.4"/>
<path d="M537.5 110.0 H544.0 L547.5 113.5 V123.5 H537.5 Z" fill="#f8f8f8" stroke="#cfcfcf" stroke-width="0.9" stroke-linejoin="round"/>
<path d="M544.0 110.0 V113.5 H547.5" fill="none" stroke="#cfcfcf" stroke-width="0.8"/>
<path d="M532.0 114.5 H539.5 L543.0 118.0 V129.8 H532.0 Z" fill="#fafafa" stroke="#c8c8c8" stroke-width="0.9" stroke-linejoin="round"/>
<path d="M539.5 114.5 V118.0 H543.0" fill="none" stroke="#c8c8c8" stroke-width="0.8"/>
<path d="M534 120 H540 M534 122.5 H541 M534 125 H541 M534 127.5 H541" stroke="#d4d4d4" stroke-width="0.7"/>
<rect x="565.5" y="111" width="15" height="18.5" fill="#eeeeee" stroke="#cfcfcf" stroke-width="1"/>
<rect x="568.5" y="109.5" width="9" height="3.5" fill="#dcdcdc"/>
<path d="M568.0 114.0 H575.0 L578.0 117.0 V127.5 H568.0 Z" fill="#fafafa" stroke="#cfcfcf" stroke-width="0.8" stroke-linejoin="round"/>
<path d="M575.0 114.0 V117.0 H578.0" fill="none" stroke="#cfcfcf" stroke-width="0.7"/>
<path d="M569.5 119 H576 M569.5 121.5 H576 M569.5 124 H576" stroke="#d4d4d4" stroke-width="0.7"/>
<path d="M597.5 119.5 L604 111.5 V116 H608 Q615 116 615 122.5 Q615 128.5 609 128.5 Q612 126 611 123 Q610 121.5 607 121.5 H604 V127 Z" fill="#ddd8d2"/>
<path d="M647.5 119.5 L641 111.5 V116 H637 Q630 116 630 122.5 Q630 128.5 636 128.5 Q633 126 634 123 Q635 121.5 638 121.5 H641 V127 Z" fill="#d8dbd6"/>
<rect x="665" y="112" width="1" height="1" fill="#a4a4a4"/><rect x="668" y="112" width="1" height="1" fill="#a4a4a4"/><rect x="665" y="115" width="1" height="1" fill="#a4a4a4"/><rect x="668" y="115" width="1" height="1" fill="#a4a4a4"/><rect x="665" y="118" width="1" height="1" fill="#a4a4a4"/><rect x="668" y="118" width="1" height="1" fill="#a4a4a4"/><rect x="665" y="121" width="1" height="1" fill="#a4a4a4"/><rect x="668" y="121" width="1" height="1" fill="#a4a4a4"/><rect x="665" y="124" width="1" height="1" fill="#a4a4a4"/><rect x="668" y="124" width="1" height="1" fill="#a4a4a4"/><rect x="665" y="127" width="1" height="1" fill="#a4a4a4"/><rect x="668" y="127" width="1" height="1" fill="#a4a4a4"/>
<path d="M678.5 117.5 L683.8 112.3 H698.7 V122.8 H683.8 Z" fill="#e8e6dc" stroke="#cfccbf" stroke-width="1"/>
<text x="683.8" y="120.5" font-size="8.5" font-weight="bold" fill="#aeaa9c" textLength="12.9" lengthAdjust="spacingAndGlyphs">abc</text>
<circle cx="720" cy="117.5" r="7" fill="#d4dcd4" stroke="#cdd0c8" stroke-width="0.6"/>
<path d="M720 117.5 V110.5 A7 7 0 0 1 726.5 120 Z" fill="#ddd2d4"/>
<path d="M720 117.5 L726.5 120 A7 7 0 0 1 713.5 120.5 Z" fill="#e4e1d4"/>
<rect x="716" y="123.5" width="5" height="7" fill="#e0ddd2"/>
<rect x="722.5" y="117.5" width="4" height="13" fill="#ccd6d0"/>
<rect x="728" y="124.5" width="5" height="6" fill="#e6d8d8"/>
<rect x="743.0" y="111.5" width="1" height="17.0" fill="#d4d4d4"/>
<path d="M752.0 117.5 L757.2 112.3 H774.5 V122.8 H757.2 Z" fill="#e6f0fc" stroke="#3a8ee6" stroke-width="1"/>
<text x="757.2" y="120.5" font-size="9.0" font-weight="bold" fill="#222" textLength="10.0" lengthAdjust="spacingAndGlyphs">ab</text>
<path d="M768.5 116 V123" stroke="#aaa" stroke-width="2"/>
<circle cx="771" cy="125.6" r="4.5" fill="#a81818" stroke="#701010" stroke-width="0.6"/>
<circle cx="769.8" cy="124.3" r="1.3" fill="#d05050"/>
<path d="M785.8 117.5 L791.0 112.3 H805.8 V122.8 H791.0 Z" fill="#fff" stroke="#ff1010" stroke-width="1"/>
<text x="791.0" y="120.5" font-size="9.0" font-weight="bold" fill="#ee0000" textLength="12.8" lengthAdjust="spacingAndGlyphs">abc</text>
<rect x="817.0" y="111.5" width="1" height="17.0" fill="#d4d4d4"/>
<path d="M826.5 117.5 L831.8 112.3 H848.5 V122.8 H831.8 Z" fill="#e8e6dc" stroke="#cfccbf" stroke-width="1"/>
<text x="831.8" y="120.5" font-size="8.5" font-weight="bold" fill="#aeaa9c" textLength="10.0" lengthAdjust="spacingAndGlyphs">ab</text>
<circle cx="845" cy="125.6" r="4.5" fill="#d2caca"/>
<path d="M859.8 117.5 L865.0 112.3 H880.3 V122.8 H865.0 Z" fill="#e8e6dc" stroke="#cfccbf" stroke-width="1"/>
<text x="865.0" y="120.5" font-size="8.5" font-weight="bold" fill="#aeaa9c" textLength="13.2" lengthAdjust="spacingAndGlyphs">abc</text>
<path d="M866 127 Q874 120.5 882 127 Q874 133.5 866 127 Z" fill="#f4f4f4" stroke="#c8c8c8" stroke-width="0.8"/>
<circle cx="874" cy="127" r="2" fill="#c0c0c0"/>
<path d="M892.5 117.5 L897.8 112.3 H913.0 V122.8 H897.8 Z" fill="#e8e6dc" stroke="#cfccbf" stroke-width="1"/>
<text x="897.8" y="120.5" font-size="8.5" font-weight="bold" fill="#aeaa9c" textLength="13.2" lengthAdjust="spacingAndGlyphs">abc</text>
<rect x="905.5" y="121" width="10.3" height="10.5" rx="1.5" fill="#d2d2d2"/>
<path d="M907.5 125 H911 V122.8 L914.3 126.2 L911 129.6 V127.4 H907.5 Z" fill="#fafafa"/>
<path d="M925.5 117.5 L930.8 112.3 H946.0 V122.8 H930.8 Z" fill="#e8e6dc" stroke="#cfccbf" stroke-width="1"/>
<text x="930.8" y="120.5" font-size="8.5" font-weight="bold" fill="#aeaa9c" textLength="13.2" lengthAdjust="spacingAndGlyphs">abc</text>
<rect x="938.5" y="121" width="10.5" height="10.5" rx="1.5" fill="#d2d2d2"/>
<path d="M946 126.5 A3 3 0 1 1 943 123.5" fill="none" stroke="#fafafa" stroke-width="1.5"/>
<path d="M958.5 117.5 L963.8 112.3 H979.0 V122.8 H963.8 Z" fill="#e8e6dc" stroke="#cfccbf" stroke-width="1"/>
<text x="963.8" y="120.5" font-size="8.5" font-weight="bold" fill="#aeaa9c" textLength="13.2" lengthAdjust="spacingAndGlyphs">abc</text>
<rect x="971.5" y="121" width="10.5" height="10.5" rx="1.5" fill="#dcd8cc"/>
<path d="M973.5 130 L980 123" stroke="#fafafa" stroke-width="1.5"/>
<rect x="996" y="112" width="1" height="1" fill="#a4a4a4"/><rect x="999" y="112" width="1" height="1" fill="#a4a4a4"/><rect x="996" y="115" width="1" height="1" fill="#a4a4a4"/><rect x="999" y="115" width="1" height="1" fill="#a4a4a4"/><rect x="996" y="118" width="1" height="1" fill="#a4a4a4"/><rect x="999" y="118" width="1" height="1" fill="#a4a4a4"/><rect x="996" y="121" width="1" height="1" fill="#a4a4a4"/><rect x="999" y="121" width="1" height="1" fill="#a4a4a4"/><rect x="996" y="124" width="1" height="1" fill="#a4a4a4"/><rect x="999" y="124" width="1" height="1" fill="#a4a4a4"/><rect x="996" y="127" width="1" height="1" fill="#a4a4a4"/><rect x="999" y="127" width="1" height="1" fill="#a4a4a4"/>
<circle cx="1021.25" cy="118.4" r="11.6" fill="#86abd2" stroke="#3a5f8a" stroke-width="1"/>
<path d="M1012 113 Q1015 111 1018 112.5 L1017 117 L1014 118 Z M1022 110.5 L1028 111 L1030 116 L1025 118 L1022 115 Z M1016 119 L1020 119.5 L1019.5 123 L1016.5 122 Z" fill="#2f5a8a"/>
<ellipse cx="1021.25" cy="118.4" rx="5.5" ry="11.6" fill="none" stroke="#e0eaf4" stroke-width="0.8"/>
<path d="M1009.7 118.4 H1032.8 M1011 112.8 H1031.5 M1011 124 H1031.5 M1021.25 106.8 V129" stroke="#e0eaf4" stroke-width="0.8"/>
<path d="M1012.3 128.3 L1015.5 121.5 Q1016.3 120.3 1017.5 120.3 L1019.3 120.3 L1020 124.3 H1025 L1025.7 120.3 H1027.5 Q1028.7 120.3 1029.5 121.5 L1032.7 128.3 Z" fill="#000"/>
<circle cx="1016.3" cy="128.5" r="4.2" fill="#000"/>
<circle cx="1028.7" cy="128.5" r="4.2" fill="#000"/>
<ellipse cx="1016.3" cy="129.3" rx="2.7" ry="1.9" fill="#fff"/>
<ellipse cx="1028.7" cy="129.3" rx="2.7" ry="1.9" fill="#fff"/>
<rect x="1047" y="112" width="1" height="1" fill="#a4a4a4"/><rect x="1050" y="112" width="1" height="1" fill="#a4a4a4"/><rect x="1047" y="115" width="1" height="1" fill="#a4a4a4"/><rect x="1050" y="115" width="1" height="1" fill="#a4a4a4"/><rect x="1047" y="118" width="1" height="1" fill="#a4a4a4"/><rect x="1050" y="118" width="1" height="1" fill="#a4a4a4"/><rect x="1047" y="121" width="1" height="1" fill="#a4a4a4"/><rect x="1050" y="121" width="1" height="1" fill="#a4a4a4"/><rect x="1047" y="124" width="1" height="1" fill="#a4a4a4"/><rect x="1050" y="124" width="1" height="1" fill="#a4a4a4"/><rect x="1047" y="127" width="1" height="1" fill="#a4a4a4"/><rect x="1050" y="127" width="1" height="1" fill="#a4a4a4"/>
<path d="M1072 110 Q1064 110 1064 113.5 V117 H1072.5 V118 H1062 Q1061.5 122 1062.5 125.5 Q1063.5 127.5 1066 127.5 V124 Q1066 121 1069.5 121 H1075 Q1078 121 1078 118 V113.5 Q1078 110 1072 110 Z" fill="#3e74a8"/>
<path d="M1071 130.8 Q1079 130.8 1079 127.3 V123.8 H1070.5 V122.8 H1081 Q1081.5 118.8 1080.5 115.3 Q1079.5 113.3 1077 113.3 V116.8 Q1077 119.8 1073.5 119.8 H1068 Q1065 119.8 1065 122.8 V127.3 Q1065 130.8 1071 130.8 Z" fill="#f6d23c"/>
<circle cx="1067.8" cy="112.5" r="0.9" fill="#fff"/><circle cx="1075.2" cy="128.3" r="0.9" fill="#fff"/>
<path d="M1077 124.5 L1083 127.5 L1077 130.5" fill="none" stroke="#333" stroke-width="1"/>
<rect x="1098" y="112" width="1" height="1" fill="#a4a4a4"/><rect x="1101" y="112" width="1" height="1" fill="#a4a4a4"/><rect x="1098" y="115" width="1" height="1" fill="#a4a4a4"/><rect x="1101" y="115" width="1" height="1" fill="#a4a4a4"/><rect x="1098" y="118" width="1" height="1" fill="#a4a4a4"/><rect x="1101" y="118" width="1" height="1" fill="#a4a4a4"/><rect x="1098" y="121" width="1" height="1" fill="#a4a4a4"/><rect x="1101" y="121" width="1" height="1" fill="#a4a4a4"/><rect x="1098" y="124" width="1" height="1" fill="#a4a4a4"/><rect x="1101" y="124" width="1" height="1" fill="#a4a4a4"/><rect x="1098" y="127" width="1" height="1" fill="#a4a4a4"/><rect x="1101" y="127" width="1" height="1" fill="#a4a4a4"/>
<rect x="1113.5" y="109.8" width="19.5" height="20" fill="#6a97c9" stroke="#1f2f40" stroke-width="1"/>
<rect x="1113.5" y="109.8" width="4.8" height="20" fill="#2c3e50"/>
<text x="1120" y="125.5" font-family="Liberation Serif, serif" font-size="14" fill="#fff">?</text>
<rect x="1149" y="112" width="1" height="1" fill="#a4a4a4"/><rect x="1152" y="112" width="1" height="1" fill="#a4a4a4"/><rect x="1149" y="115" width="1" height="1" fill="#a4a4a4"/><rect x="1152" y="115" width="1" height="1" fill="#a4a4a4"/><rect x="1149" y="118" width="1" height="1" fill="#a4a4a4"/><rect x="1152" y="118" width="1" height="1" fill="#a4a4a4"/><rect x="1149" y="121" width="1" height="1" fill="#a4a4a4"/><rect x="1152" y="121" width="1" height="1" fill="#a4a4a4"/><rect x="1149" y="124" width="1" height="1" fill="#a4a4a4"/><rect x="1152" y="124" width="1" height="1" fill="#a4a4a4"/><rect x="1149" y="127" width="1" height="1" fill="#a4a4a4"/><rect x="1152" y="127" width="1" height="1" fill="#a4a4a4"/>
<rect x="4" y="152" width="1" height="1" fill="#a4a4a4"/><rect x="7" y="152" width="1" height="1" fill="#a4a4a4"/><rect x="4" y="155" width="1" height="1" fill="#a4a4a4"/><rect x="7" y="155" width="1" height="1" fill="#a4a4a4"/><rect x="4" y="158" width="1" height="1" fill="#a4a4a4"/><rect x="7" y="158" width="1" height="1" fill="#a4a4a4"/><rect x="4" y="161" width="1" height="1" fill="#a4a4a4"/><rect x="7" y="161" width="1" height="1" fill="#a4a4a4"/><rect x="4" y="164" width="1" height="1" fill="#a4a4a4"/><rect x="7" y="164" width="1" height="1" fill="#a4a4a4"/>
<rect x="18.5" y="148.8" width="21" height="20" fill="#f2f2f2" stroke="#bcbcbc" stroke-width="1" stroke-dasharray="1.6,1.4"/>
<rect x="19.5" y="149.6" width="13.5" height="13.8" fill="#e2dfd6" stroke="#d8d4c8" stroke-width="0.6"/>
<path d="M27.5 155.5 L30.5 170 L33 166.8 L37 170.5 L38.6 169 L34.8 165.4 L39.5 164 Z" fill="#f8f8f8" stroke="#cdcdcd" stroke-width="0.9" stroke-linejoin="round"/>
<path d="M48.0 157.2 L57.0 157.2 L52.5 161.7 Z" fill="#9a9a9a"/>
<rect x="71.5" y="155.3" width="15" height="13.3" fill="#e2dfd6" stroke="#d4d0c6" stroke-width="0.7"/>
<rect x="68.5" y="150.3" width="14" height="13.3" fill="#f2f2f2" stroke="#d8d8d8" stroke-width="1"/>
<rect x="70.5" y="153" width="10" height="2.8" fill="#fff" stroke="#dadada" stroke-width="0.6"/>
<rect x="70.5" y="157.5" width="10" height="2.8" fill="#fff" stroke="#dadada" stroke-width="0.6"/>
<path d="M95.8 157.2 L105.0 157.2 L100.4 161.7 Z" fill="#9a9a9a"/>
<rect x="115.5" y="149.4" width="13" height="12.5" fill="#fce84a" stroke="#c8a800" stroke-width="1"/>
<rect x="120" y="153.7" width="13" height="13" fill="#fce84a" stroke="#c8a800" stroke-width="1"/>
<rect x="126.5" y="160.3" width="10.3" height="10.3" rx="1.6" fill="#d01c24" stroke="#a01018" stroke-width="0.6"/>
<circle cx="131.65" cy="165.45" r="3.2" fill="none" stroke="#fff" stroke-width="1.1"/>
<path d="M129.5 167.6 L133.8 163.3" stroke="#fff" stroke-width="1.1"/>
<path d="M143.9 157.2 L153.0 157.2 L148.4 161.7 Z" fill="#404040"/>
<rect x="163.6" y="149.4" width="13.5" height="13.5" fill="#fce84a" stroke="#c8a800" stroke-width="1"/>
<path d="M180.5 169.7 L177.3 163.5 A3.4 3.4 0 1 1 183.7 163.5 Z" fill="#6d8fa8" stroke="#4e6f88" stroke-width="0.6"/>
<circle cx="180.5" cy="162" r="1.2" fill="#fff"/>
<rect x="275.5" y="183.5" width="10" height="10" rx="2" fill="none" stroke="#707070" stroke-width="1"/>
<rect x="279" y="185.5" width="4.5" height="4.5" fill="none" stroke="#707070" stroke-width="1"/>
<rect x="277.5" y="187.5" width="4.5" height="4.5" fill="#fff" stroke="#707070" stroke-width="1"/>
<rect x="289.5" y="183.5" width="10" height="10" rx="2" fill="none" stroke="#707070" stroke-width="1"/>
<path d="M292 186.0 L297 191.0 M297 186.0 L292 191.0" stroke="#606060" stroke-width="2"/>
<rect x="275.5" y="465.5" width="10" height="10" rx="2" fill="none" stroke="#707070" stroke-width="1"/>
<rect x="279" y="467.5" width="4.5" height="4.5" fill="none" stroke="#707070" stroke-width="1"/>
<rect x="277.5" y="469.5" width="4.5" height="4.5" fill="#fff" stroke="#707070" stroke-width="1"/>
<rect x="289.5" y="465.5" width="10" height="10" rx="2" fill="none" stroke="#707070" stroke-width="1"/>
<path d="M292 468.0 L297 473.0 M297 468.0 L292 473.0" stroke="#606060" stroke-width="2"/>
<rect x="7.5" y="206" width="11" height="11" fill="#f4f4f4" stroke="#707070" stroke-width="1"/>
<rect x="15" y="215.3" width="6" height="6" rx="1.3" fill="#4f9a55"/><circle cx="18" cy="218.3" r="1.5" fill="#d8ecd8"/>
<g transform="translate(32 205.3) scale(0.7) translate(-729.9 -70)"><path d="M729.9 80.2 C730.3 74 734 70 739 70 C743 70 746 71.5 747.5 72.8 L749.9 70.8 V80.6 H741.2 L743.2 77.8 C741.5 76 739.5 75 737 75 C734 75 731.8 77 731 80.2 Z" fill="#4a84c6"/><path transform="rotate(180 740 81)" d="M729.9 80.2 C730.3 74 734 70 739 70 C743 70 746 71.5 747.5 72.8 L749.9 70.8 V80.6 H741.2 L743.2 77.8 C741.5 76 739.5 75 737 75 C734 75 731.8 77 731 80.2 Z" fill="#3f7bc0"/></g>
<path d="M57 205.5 H71 L65.5 212.5 V220.5 L62.5 219 V212.5 Z" fill="#6d97c9" stroke="#3f6594" stroke-width="0.6"/>
<rect x="57" y="205.5" width="14" height="2" fill="#f0d040"/>
<path d="M82 207 H96 M83 207 V219" fill="none" stroke="#aaa" stroke-width="0.9"/>
<rect x="86" y="210" width="2.6" height="2.6" fill="#f39c12"/><rect x="86" y="216" width="2.6" height="2.6" fill="#f39c12"/>
<path d="M87.5 213 L92 205.5 L96.5 213 H94 V219 H90 V213 Z" fill="#5b8ac2" stroke="#2f4f78" stroke-width="0.8"/>
<circle cx="114" cy="213" r="6.8" fill="#6d97c9" stroke="#4e78ac" stroke-width="0.7"/>
<text x="112" y="217.5" font-size="10" font-weight="bold" font-style="italic" fill="#fff">i</text>
<rect x="27.2" y="231.4" width="19.5" height="19" rx="2.5" fill="#6a97c9"/>
<text x="29" y="244" font-size="7" font-weight="bold" fill="#e8f0f8" textLength="15.5" lengthAdjust="spacingAndGlyphs">DB2</text>
<ellipse cx="37" cy="263" rx="9.6" ry="8.8" fill="#c4d6ea" stroke="#6a8cb4" stroke-width="0.9"/>
<path d="M30 259.5 Q32 257 35 257.5 L34.5 261 L32.5 262 L31 261 Z M37.5 256 L41.5 256.5 L43 259 L40.5 261.5 L38.5 260 Z M35.5 263.5 L38 263 L38.5 266.5 L36.5 269.5 L35.5 267 Z M41 264 L44 263.5 L43 267 Z M30.5 264 L32.5 265 L32 267.5 Z" fill="#2c4a6e"/>
<rect x="28.8" y="276.8" width="16.8" height="16.8" fill="#e6eef6" stroke="#2c3e50" stroke-width="1.4"/>
<path d="M34.4 277 V293.5 M40 277 V293.5 M29 282.4 H45.5 M29 288 H45.5" stroke="#2c3e50" stroke-width="1.4"/>
<rect x="28.8" y="298.6" width="4.4" height="4.4" fill="#6a97c9"/>
<rect x="28.8" y="304.8" width="4.4" height="4.4" fill="#6a97c9"/>
<rect x="28.8" y="311.0" width="4.4" height="4.4" fill="#6a97c9"/>
<rect x="35.0" y="298.6" width="4.4" height="4.4" fill="#6a97c9"/>
<rect x="35.0" y="304.8" width="4.4" height="4.4" fill="#6a97c9"/>
<rect x="35.0" y="311.0" width="4.4" height="4.4" fill="#6a97c9"/>
<rect x="41.2" y="298.6" width="4.4" height="4.4" fill="#6a97c9"/>
<rect x="41.2" y="304.8" width="4.4" height="4.4" fill="#6a97c9"/>
<rect x="41.2" y="311.0" width="4.4" height="4.4" fill="#6a97c9"/>
<rect x="54.0" y="320.5" width="4.4" height="4.4" fill="#4b88cc"/>
<rect x="54.0" y="326.7" width="4.4" height="4.4" fill="#4b88cc"/>
<rect x="54.0" y="332.9" width="4.4" height="4.4" fill="#4b88cc"/>
<rect x="60.2" y="320.5" width="4.4" height="4.4" fill="#4b88cc"/>
<rect x="60.2" y="326.7" width="4.4" height="4.4" fill="#4b88cc"/>
<rect x="60.2" y="332.9" width="4.4" height="4.4" fill="#4b88cc"/>
<rect x="66.4" y="320.5" width="4.4" height="4.4" fill="#4b88cc"/>
<rect x="66.4" y="326.7" width="4.4" height="4.4" fill="#4b88cc"/>
<rect x="66.4" y="332.9" width="4.4" height="4.4" fill="#4b88cc"/>
<ellipse cx="37" cy="350.6" rx="9.8" ry="8.6" fill="#1f3f66"/>
<ellipse cx="37" cy="350.6" rx="7.6" ry="7.4" fill="#6a94c4"/>
<path d="M29.5 348.5 H44.5 M29.5 352.7 H44.5" stroke="#dde8f4" stroke-width="1.6"/>
<ellipse cx="37" cy="350.6" rx="4.2" ry="7.6" fill="none" stroke="#dde8f4" stroke-width="0.9"/>
<ellipse cx="37" cy="372.8" rx="9.8" ry="8.6" fill="#f4f8fc" stroke="#4a7ec0" stroke-width="1"/>
<path d="M27.5 372.8 H46.5 M28.8 368.5 H45.2 M28.8 377.1 H45.2" stroke="#8fb2dc" stroke-width="0.8"/>
<ellipse cx="37" cy="372.8" rx="4.6" ry="8.6" fill="none" stroke="#8fb2dc" stroke-width="0.8"/>
<path d="M31.5 367 L35.5 379 L39.5 367.5 L42.5 366.5" fill="none" stroke="#25364a" stroke-width="1.1"/>
<ellipse cx="37" cy="394.7" rx="9.8" ry="8.6" fill="#f4f8fc" stroke="#4a7ec0" stroke-width="1"/>
<path d="M27.5 394.7 H46.5 M28.8 390.4 H45.2 M28.8 399.0 H45.2" stroke="#8fb2dc" stroke-width="0.8"/>
<ellipse cx="37" cy="394.7" rx="4.6" ry="8.6" fill="none" stroke="#8fb2dc" stroke-width="0.8"/>
<ellipse cx="37" cy="417" rx="9.8" ry="8.6" fill="#8fb0d4" stroke="#4a7ab0" stroke-width="1"/>
<path d="M39 411 L43 411.5 L44 415 L41 416 Z M42 417.5 L44.5 418 L43 421 Z" fill="#3a5a80" opacity="0.7"/>
<path d="M29 419 L31.5 415.5 L34.5 416.5 L36 419.5 L35 424 L32.5 425 L30 423 Z" fill="#1a1a1a"/>
<path d="M31 418.5 L33 420 M32 422 L34 421.5" stroke="#ddd" stroke-width="0.6"/>
<ellipse cx="37" cy="439.0" rx="9.8" ry="8.6" fill="#f4f8fc" stroke="#4a7ec0" stroke-width="1"/>
<path d="M27.5 439.0 H46.5 M28.8 434.7 H45.2 M28.8 443.3 H45.2" stroke="#8fb2dc" stroke-width="0.8"/>
<ellipse cx="37" cy="439.0" rx="4.6" ry="8.6" fill="none" stroke="#8fb2dc" stroke-width="0.8"/>
<path d="M33.5 433 L36.5 443 L40 433.5 L43 432.5" fill="none" stroke="#25364a" stroke-width="1"/>
<path d="M29 441 L31.5 437.5 L34.5 438.5 L36 441.5 L35 446 L32.5 447 L30 445 Z" fill="#1a1a1a"/>
<path d="M35 453 Q37 450 39 453 Z" fill="#5a80aa"/>
<path d="M7 496 L13.5 500.5 L11.5 502.5 L6.5 499 Z" fill="#e84040"/>
<path d="M8 493.5 L15 498 L13.5 500.5 L7 496 Z" fill="#5b8ac2"/>
<path d="M9.5 491 L16.5 495.5 L15 498 L8 493.5 Z" fill="#f6dc40"/>
<path d="M12 494 L17.5 497.5 L15 501 L10.5 498 Z" fill="#d8a860" stroke="#a07030" stroke-width="0.5"/>
<path d="M15.5 495 L21 489" stroke="#d09a40" stroke-width="2.2" stroke-linecap="round"/>
<path d="M35 491.5 H43 V500 H35 Z" fill="none" stroke="#777" stroke-width="0.9"/>
<path d="M33 493.5 V502 H41" fill="none" stroke="#777" stroke-width="0.9"/>
<path d="M37.5 497 V489.5 Q37.5 487.3 39.3 487.3 Q41 487.3 41 489.5 V497" fill="none" stroke="#4e7bb5" stroke-width="1"/>
<rect x="40.2" y="496.8" width="6" height="6" rx="1" fill="#4f9a55"/>
<circle cx="43.2" cy="499.8" r="1.8" fill="#e8f4e8"/>
<path d="M57 495 Q63.5 487 70.5 493.5" fill="none" stroke="#888" stroke-width="0.8"/>
<path d="M57 495 Q63 500.5 68 498" fill="none" stroke="#888" stroke-width="0.8"/>
<circle cx="63.5" cy="494" r="3.4" fill="#5b8ac2"/><circle cx="63.5" cy="493.5" r="1.3" fill="#000"/>
<path d="M65.5 497.5 H74.5 L70 503 Z" fill="#505050"/>
<path d="M82 487.5 H96 L90.5 494.5 V502.5 L87.5 501 V494.5 Z" fill="#6d97c9" stroke="#3f6594" stroke-width="0.6"/>
<rect x="82" y="487.5" width="14" height="2" fill="#f0d040"/>
<text x="107.3" y="497.8" font-size="14" fill="#d0d0d0" textLength="8" lengthAdjust="spacingAndGlyphs">ε</text>
<path d="M115.5 495.5 H121.5 V502.5 H115.5 Z" fill="#e8e8e8"/>
<path d="M128.5 493.0 L138.5 493.0 L133.5 497.5 Z" fill="#a8a8a8"/>
<path d="M147.5 489 H161 M148.5 489 V501" fill="none" stroke="#aaa" stroke-width="0.9"/>
<rect x="151" y="492" width="2.5" height="2.5" fill="#f39c12"/><rect x="151" y="498" width="2.5" height="2.5" fill="#f39c12"/>
<path d="M152.5 495.5 L157 502.5 L161.5 495.5 H159 V488.3 H155 V495.5 Z" fill="#5b8ac2" stroke="#2f4f78" stroke-width="0.7"/>
<path d="M172 489 H186 M173 489 V501" fill="none" stroke="#aaa" stroke-width="0.9"/>
<rect x="175.5" y="492" width="2.5" height="2.5" fill="#f39c12"/><rect x="175.5" y="498" width="2.5" height="2.5" fill="#f39c12"/>
<path d="M177.5 495 L182 487.5 L186.5 495 H184 V501.5 H180 V495 Z" fill="#5b8ac2" stroke="#2f4f78" stroke-width="0.7"/>
<rect x="197.5" y="488.5" width="11.5" height="11" fill="#ececec" stroke="#707070" stroke-width="1"/>
<rect x="205" y="497.5" width="6.5" height="5" rx="1.2" fill="#e83040"/>
<rect x="206.3" y="499.5" width="4" height="1.2" fill="#fff"/>
<rect x="527.5" y="279.5" width="4.4" height="4.4" fill="#4b88cc"/>
<rect x="527.5" y="285.7" width="4.4" height="4.4" fill="#4b88cc"/>
<rect x="527.5" y="291.9" width="4.4" height="4.4" fill="#4b88cc"/>
<rect x="533.7" y="279.5" width="4.4" height="4.4" fill="#4b88cc"/>
<rect x="533.7" y="285.7" width="4.4" height="4.4" fill="#4b88cc"/>
<rect x="533.7" y="291.9" width="4.4" height="4.4" fill="#4b88cc"/>
<rect x="539.9" y="279.5" width="4.4" height="4.4" fill="#4b88cc"/>
<rect x="539.9" y="285.7" width="4.4" height="4.4" fill="#4b88cc"/>
<rect x="539.9" y="291.9" width="4.4" height="4.4" fill="#4b88cc"/>
<path d="M659.7 279.5 V295.3 L663.4 291.8 L666.4 297.6 L668.4 296.7 L665.6 291 L670.3 291 Z" fill="#fff" stroke="#000" stroke-width="1" stroke-linejoin="round"/>
<rect x="670.5" y="299.8" width="8" height="7.6" rx="1" fill="#fff" stroke="#000" stroke-width="1"/>
<path d="M674.5 301.3 V306 M672.1 303.6 H676.9" stroke="#000" stroke-width="1.3"/>
<circle cx="16" cy="699.5" r="4.2" fill="none" stroke="#777" stroke-width="1.3"/>
<path d="M19 702.5 L23 706.5" stroke="#777" stroke-width="1.5"/>
<g transform="rotate(-32 510.6 700.4)"><rect x="505.2" y="691.2" width="10.8" height="18.4" rx="5.4" fill="#fff" stroke="#000" stroke-width="1.7"/><path d="M505.2 699.5 V696.6 A5.4 5.4 0 0 1 516 696.6 V699.5 Z" fill="#000"/><path d="M508 693.5 V698.5 M511.5 693 V698.5" stroke="#fff" stroke-width="1.1"/><circle cx="510.6" cy="704.6" r="2.1" fill="#fff" stroke="#000" stroke-width="1.3"/></g>
<rect x="517.5" y="691.5" width="1.8" height="1.8" fill="#111"/><rect x="515.2" y="693.8" width="1.3" height="1.3" fill="#333"/><rect x="503" y="703" width="1.5" height="1.5" fill="#555"/>
<path d="M677.3 701 V697.5 Q677.3 692.6 682.3 692.6 Q687.3 692.6 687.3 697.5 V701" fill="none" stroke="#707070" stroke-width="1.9"/>
<rect x="674.5" y="700" width="15.5" height="10.8" rx="1.5" fill="#707070"/>
<path d="M1094 692.5 H1104 L1109 698.5 Q1108.5 709.5 1099 709.5 Q1089.5 709.5 1089 698.5 Z" fill="#f0f0f0" stroke="#707070" stroke-width="1.3" stroke-linejoin="round"/>
<path d="M1089.5 698.8 H1108.5 M1090.5 703.5 H1107.5 M1092 707 H1106 M1099 692.5 V709.5 M1096 692.5 L1094.5 709 M1102 692.5 L1103.5 709 M1094 692.5 L1090 707 M1104 692.5 L1108 707" stroke="#707070" stroke-width="0.9"/>
<ellipse cx="1207" cy="700" rx="10" ry="8" fill="#6a6a6a"/>
<path d="M1207 706 L1215 711 L1212 704 Z" fill="#6a6a6a"/>
<circle cx="1202.5" cy="700" r="1.4" fill="#fff"/><circle cx="1207" cy="700" r="1.4" fill="#fff"/><circle cx="1211.5" cy="700" r="1.4" fill="#fff"/>
<rect x="1242" y="712" width="1.3" height="1.3" fill="#c0c0c0"/>
<rect x="1239" y="712" width="1.3" height="1.3" fill="#c0c0c0"/>
<rect x="1242" y="709" width="1.3" height="1.3" fill="#c0c0c0"/>
<rect x="1236" y="712" width="1.3" height="1.3" fill="#c0c0c0"/>
<rect x="1239" y="709" width="1.3" height="1.3" fill="#c0c0c0"/>
<rect x="1242" y="706" width="1.3" height="1.3" fill="#c0c0c0"/>
<ellipse cx="24.85" cy="119.25" rx="19.1" ry="18.5" fill="none" stroke="#f0080c" stroke-width="2.3"/>
<path d="M49.5 139.5 L72.6 142.7 L61.7 159.5 Z" fill="#ff0000"/>
<path d="M66 151 L120.7 185.5" stroke="#ff0000" stroke-width="4" stroke-linecap="round"/>
</svg>
</body></html>
